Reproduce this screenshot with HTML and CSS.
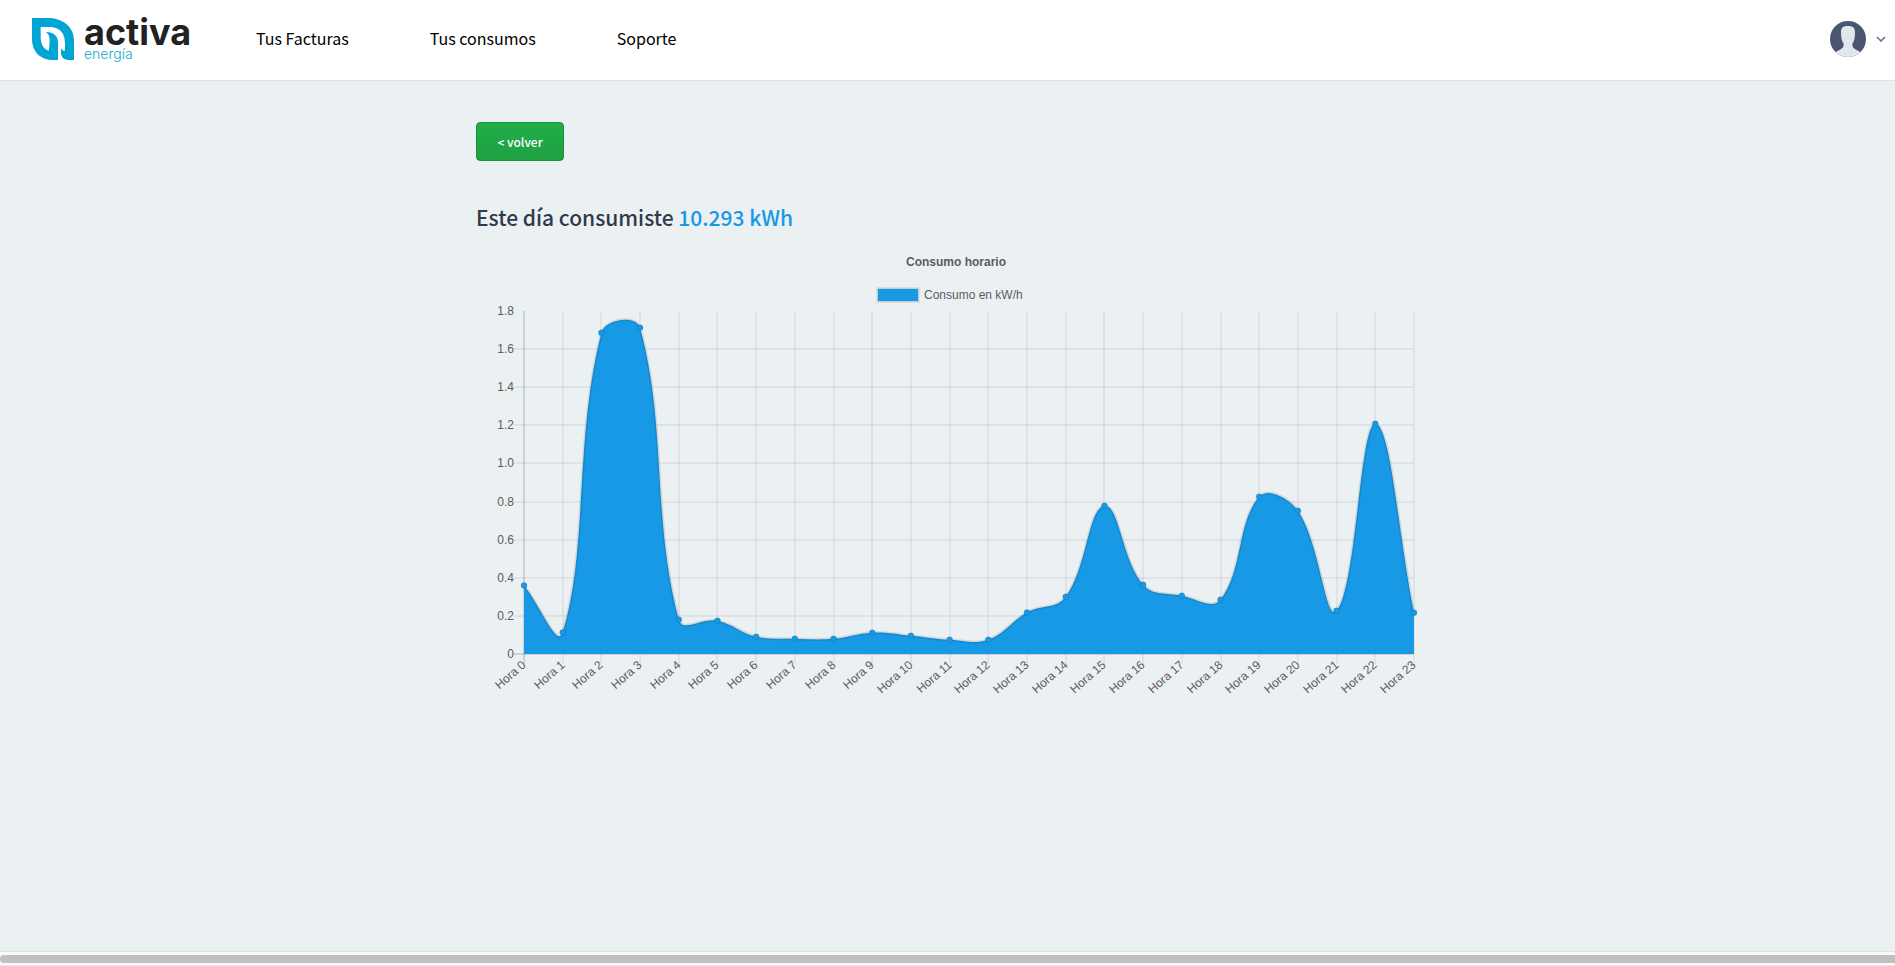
FILE: index.html
```html
<!DOCTYPE html>
<html lang="es">
<head>
<meta charset="utf-8">
<title>Activa Energía - Consumo horario</title>
<link rel="stylesheet" href="styles.css">
</head>
<body>
<header class="topbar">
  <a class="logo" href="#">
    <svg class="logo-mark" viewBox="0 0 126 126" aria-hidden="true">
      <path fill="#00a5d5" fill-rule="evenodd" d="M0 0H54C98 3 126 30 126 68V126H113C96 126 87 118 87 104V91C90 96 94 99 98 99C99 92 99 86 99 76C99 50 88 27 50 27H26V56C26 78 34 92 50 98C52 88 53 78 53 67C53 56 50 48 42 42C66 42 78 54 78 76V126H66C26 126 0 102 0 62Z"/>
    </svg>
    <span class="logo-text"><span class="logo-name">activa</span><span class="logo-sub">energía</span></span>
  </a>
  <nav class="nav">
    <a href="#">Tus Facturas</a>
    <a href="#">Tus consumos</a>
    <a href="#">Soporte</a>
  </nav>
  <button class="account" type="button" aria-label="Cuenta">
    <svg class="avatar" viewBox="0 0 36 36" aria-hidden="true">
      <defs><clipPath id="disc"><circle cx="18" cy="18" r="18"/></clipPath></defs>
      <g clip-path="url(#disc)">
        <rect width="36" height="36" fill="#4a5573"/>
        <path fill="#e1e7eb" d="M18 5C22.500 5 25 6.500 25 11C25 16 24.500 20 22.500 22.500V25C23 27.500 27 29 30 31V36H6V31C9 29 13 27.500 13.500 25V22.500C11.500 20 11 16 11 11C11 6.500 13.500 5 18 5Z"/>
      </g>
    </svg>
    <svg class="chevron" viewBox="0 0 10 6" aria-hidden="true"><path d="M1 1L5 5L9 1" fill="none" stroke="#5f7390" stroke-width="1.600"/></svg>
  </button>
</header>
<main class="content">
  <button class="back" type="button">&lt; volver</button>
  <h1 class="heading">Este día consumiste <span class="amount">10.293 kWh</span></h1>
  <svg class="chart" id="chart" viewBox="0 0 943 460" role="img" aria-label="Consumo horario"></svg>
</main>
<div class="scrollbar"><div class="thumb"></div></div>
<script src="chart.js"></script>
</body>
</html>
```
FILE: styles.css
```css
* { box-sizing: border-box; }
body {
  margin: 0;
  min-height: 100vh;
  display: flex;
  flex-direction: column;
  background: #ebf0f3;
  color: #313a4b;
  font-family: "Noto Sans CJK SC", "Open Sans", sans-serif;
}
.topbar {
  display: flex;
  align-items: center;
  height: 81px;
  padding: 0 9px 2px 32px;
  background: #fff;
  border-bottom: 1px solid #dce3e7;
}
.logo { display: flex; gap: 10px; width: 224px; text-decoration: none; }
.logo-mark { width: 42px; height: 42px; }
.logo-text { display: flex; flex-direction: column; height: 42px; font-family: Inter, sans-serif; }
.logo-name { font-size: 36px; font-weight: 700; line-height: 29px; color: #222; }
.logo-sub { font-size: 14px; font-weight: 300; line-height: 14px; color: #20a8d2; }
.nav { display: flex; gap: 81px; flex: 1; padding-bottom: 2px; }
.nav a { color: #000; text-decoration: none; font-size: 16px; line-height: 24px; }
.account {
  display: flex;
  align-items: center;
  gap: 10px;
  padding: 0;
  border: 0;
  background: none;
}
.avatar { width: 36px; height: 36px; }
.chevron { width: 10px; height: 6px; }
.content {
  flex: 1;
  width: 100%;
  max-width: 943px;
  margin: 0 auto;
  padding-top: 41px;
}
.back {
  display: block;
  width: 88px;
  height: 39px;
  padding: 0 0 1px;
  border: 1px solid #149036;
  border-radius: 4px;
  background: linear-gradient(#22ae49, #1fa044);
  color: #fff;
  font-family: inherit;
  font-size: 12px;
  font-weight: 500;
}
.heading {
  margin: 40px 0 0;
  font-size: 21px;
  font-weight: 500;
  line-height: 32px;
}
.amount { color: #1799e5; }
.chart { display: block; width: 100%; margin-top: 14px; overflow: visible; }
.chart text { font-family: "Liberation Sans", Arial, sans-serif; font-size: 12px; fill: #5c5c5c; }
.chart .title { font-weight: 700; }
.chart .end { text-anchor: end; }
.chart .mid { text-anchor: middle; }
.chart .grid { stroke: #000; stroke-opacity: .1; }
.chart .axis { stroke: #000; stroke-opacity: .25; }
.chart .area { fill: #1799e5; }
.chart .curve { fill: none; stroke: #000; stroke-opacity: .1; stroke-width: 3; }
.chart .dot { fill: #1799e5; stroke: #000; stroke-opacity: .1; }
.chart .key { fill: #1799e5; stroke: #000; stroke-opacity: .15; stroke-width: 3; paint-order: stroke; }
.scrollbar {
  height: 15px;
  padding: 3px 0 2px;
  background: #fafafa;
  border-top: 1px solid #e2e2e2;
  border-bottom: 1px solid #e8e8e8;
}
.thumb { height: 8px; border-radius: 4px 0 0 4px; background: #c0c0c0; }
```
FILE: chart.js
```js
const values = [0.36, 0.113, 1.686, 1.712, 0.18, 0.175, 0.091, 0.08, 0.08, 0.112, 0.096, 0.075,
  0.075, 0.218, 0.3, 0.778, 0.363, 0.306, 0.285, 0.825, 0.752, 0.227, 1.208, 0.217];
const area = { left: 48, right: 938, top: 64, bottom: 407 };
const svg = document.getElementById('chart');

function add(tag, attrs, text) {
  const el = document.createElementNS('http://www.w3.org/2000/svg', tag);
  for (const name in attrs) el.setAttribute(name, attrs[name]);
  if (text !== undefined) el.textContent = text;
  svg.appendChild(el);
}
const px = i => area.left + i * (area.right - area.left) / (values.length - 1);
const py = v => area.bottom - v * (area.bottom - area.top) / 1.8;
const points = values.map((v, i) => ({ x: px(i), y: py(v) }));

add('text', { class: 'title mid', x: 480, y: 19 }, 'Consumo horario');
add('rect', { class: 'key', x: 402, y: 42, width: 40, height: 12 });
add('text', { x: 448, y: 52 }, 'Consumo en kW/h');

for (let i = 0; i <= 9; i++) {
  const y = Math.round(py(i * 0.2));
  if (i < 9) add('line', { class: i ? 'grid' : 'axis', x1: area.left - 10, x2: area.right, y1: y, y2: y });
  add('text', { class: 'end', x: 38, y: y + 4 }, i ? (i * 0.2).toFixed(1) : '0');
}
points.forEach((p, i) => {
  const x = Math.round(p.x);
  add('line', { class: i ? 'grid' : 'axis', x1: x, x2: x, y1: area.top, y2: area.bottom + 10 });
  add('text', { class: 'end', x: 0, y: 4, transform: `translate(${x} ${area.bottom + 9}) rotate(-41)` }, 'Hora ' + i);
});

// Spline with control points proportional to neighbour distance.
const tension = 0.4;
const clamp = y => Math.min(area.bottom, Math.max(area.top, y));
const controls = points.map((p, i) => {
  const a = points[i - 1] || p;
  const b = points[i + 1] || p;
  const da = Math.hypot(p.x - a.x, p.y - a.y);
  const db = Math.hypot(b.x - p.x, b.y - p.y);
  const fa = tension * da / (da + db);
  const fb = tension * db / (da + db);
  return {
    inX: p.x - fa * (b.x - a.x), inY: clamp(p.y - fa * (b.y - a.y)),
    outX: p.x + fb * (b.x - a.x), outY: clamp(p.y + fb * (b.y - a.y))
  };
});
let d = `M${points[0].x} ${points[0].y}`;
for (let i = 1; i < points.length; i++) {
  const c = controls[i - 1], n = controls[i], p = points[i];
  d += `C${c.outX} ${c.outY} ${n.inX} ${n.inY} ${p.x} ${p.y}`;
}
add('path', { class: 'area', d: `${d}V${area.bottom}H${area.left}Z` });
add('path', { class: 'curve', d });
points.forEach(p => add('circle', { class: 'dot', cx: p.x, cy: p.y, r: 3 }));
```
